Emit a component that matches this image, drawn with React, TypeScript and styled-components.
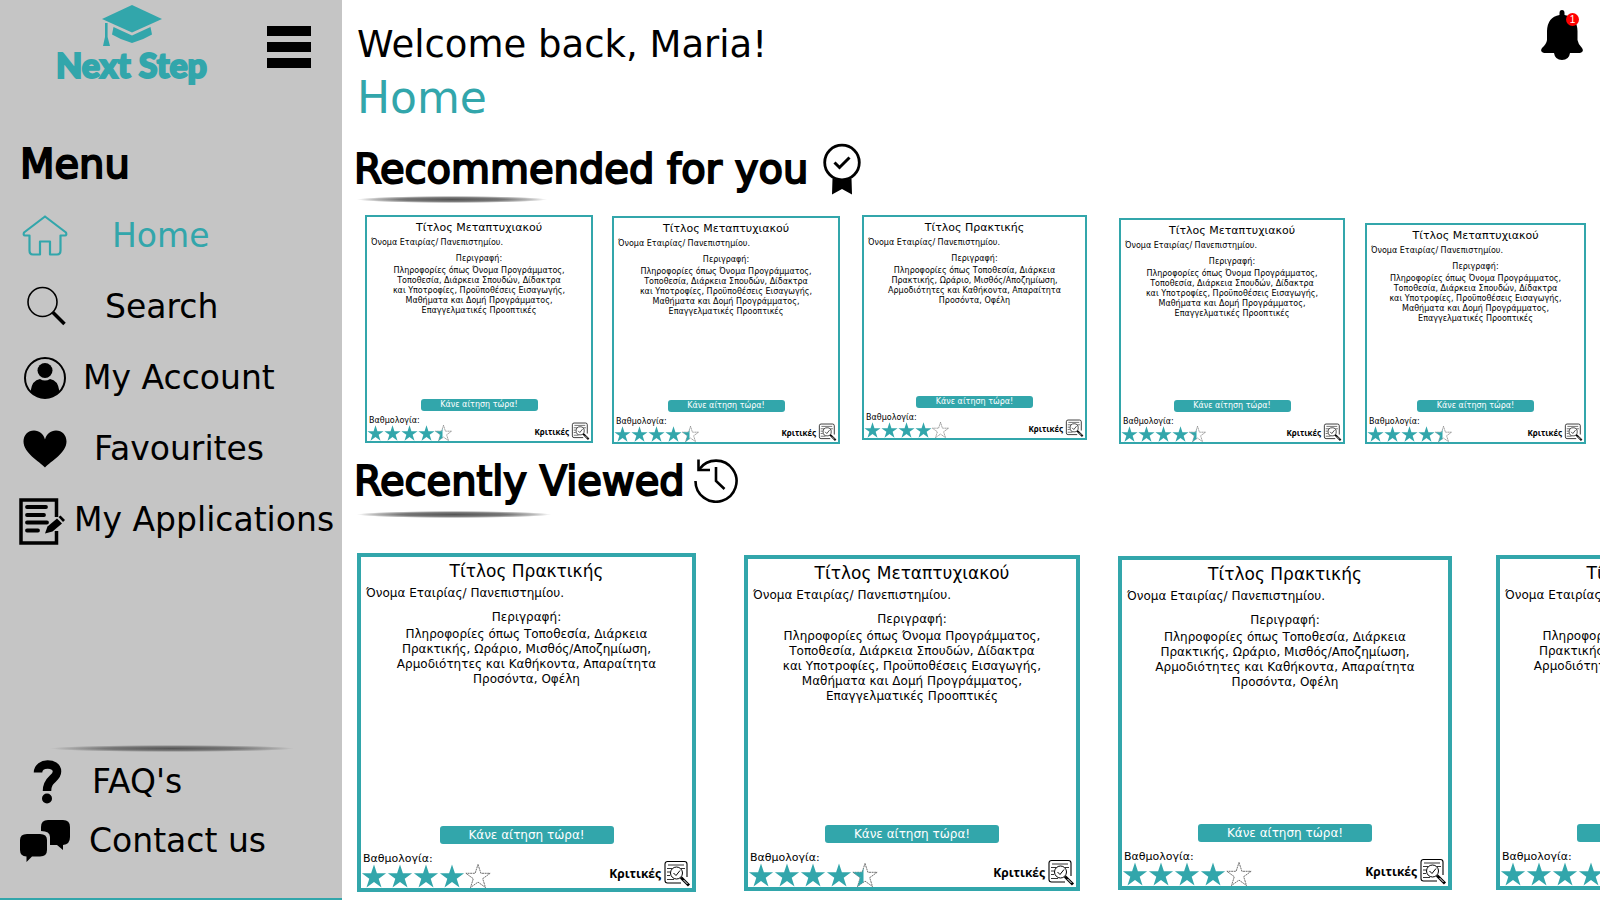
import React from "react";
import styled, { createGlobalStyle, css } from "styled-components";

const teal = "#32a6ab";

const GlobalStyle = createGlobalStyle`
  *, *::before, *::after { box-sizing: border-box; }
  body {
    margin: 0;
    background: #fff;
    color: #000;
    font-family: Verdana, "DejaVu Sans", sans-serif;
  }
  h1, h2, h3, p, ul { margin: 0; padding: 0; font-weight: 400; }
  ul { list-style: none; }
  a { color: inherit; text-decoration: none; }
  button { font-family: inherit; color: inherit; border: 0; padding: 0; background: none; cursor: pointer; }
  svg { display: block; flex: none; }
`;

const Page = styled.div`
  display: flex;
  min-height: 100vh;
`;

const Sidebar = styled.aside`
  display: flex;
  flex-direction: column;
  flex: none;
  width: 342px;
  background: #c5c5c5;
  border-bottom: 2px solid ${teal};
`;

const SidebarHeader = styled.div`
  display: flex;
  justify-content: space-between;
  align-items: flex-start;
  padding: 4px 31px 0 56px;
  height: 137px;
`;

const Brand = styled.a`
  display: flex;
  flex-direction: column;
  align-items: center;
  color: ${teal};
`;

const BrandName = styled.span`
  font-family: Lato, sans-serif;
  font-weight: 900;
  font-size: 34px;
  line-height: 34px;
  white-space: nowrap;
  -webkit-text-stroke: 2px ${teal};
`;

const MenuButton = styled.button`
  display: flex;
  flex-direction: column;
  gap: 6px;
  width: 44px;
  margin-top: 22px;
`;

const MenuBar = styled.span`
  height: 10px;
  background: #000;
`;

const heading = css`
  font-size: 40px;
  line-height: 54px;
  white-space: nowrap;
  -webkit-text-stroke: 2px #000;
`;

const MenuTitle = styled.h2`
  ${heading}
  padding-left: 20px;
  margin-bottom: 9px;
`;

const NavList = styled.ul<{ $row: number }>`
  li { height: ${(p) => p.$row}px; }
`;

const NavLink = styled.a<{ $active?: boolean; $gap: number }>`
  display: flex;
  align-items: center;
  gap: ${(p) => p.$gap}px;
  height: 100%;
  padding-left: 19px;
  color: ${(p) => (p.$active ? teal : "#000")};
  font-size: 33px;
  line-height: 40px;
  white-space: nowrap;
`;

const IconSlot = styled.span`
  display: flex;
  justify-content: center;
  flex: none;
  width: 52px;
`;

const SidebarFooter = styled.div`
  margin-top: auto;
  padding-bottom: 28px;
`;

const Shade = styled.div<{ $width: number }>`
  width: ${(p) => p.$width}px;
  height: 7px;
  background: radial-gradient(closest-side, #555 0%, #777 55%, rgba(140, 140, 140, 0.6) 82%, rgba(160, 160, 160, 0) 100%);
`;

const SidebarShade = styled(Shade)`
  margin-left: 50px;
`;

const Main = styled.main`
  flex: 1;
  min-width: 0;
  overflow: hidden;
`;

const TopBar = styled.header`
  display: flex;
  justify-content: space-between;
  align-items: flex-start;
  padding: 9px 16px 0 15px;
`;

const Greeting = styled.p`
  padding-top: 12px;
  font-size: 37px;
  line-height: 48px;
`;

const PageTitle = styled.h1`
  color: ${teal};
  font-size: 44px;
  line-height: 58px;
`;

const BellButton = styled.button`
  position: relative;
  width: 44px;
  height: 52px;
`;

const Badge = styled.span`
  position: absolute;
  top: 4px;
  right: 5px;
  width: 13px;
  height: 13px;
  border-radius: 50%;
  background: #f00;
  color: #fff;
  font: 10px/13px "Liberation Sans", sans-serif;
  text-align: center;
`;

const SectionHead = styled.div<{ $gap: number }>`
  display: flex;
  align-items: center;
  gap: ${(p) => p.$gap}px;
  padding-left: 12px;
`;

const SectionTitle = styled.h2`
  ${heading}
`;

const SectionShade = styled(Shade)`
  margin-left: 15px;
`;

const RecommendedSection = styled.section`
  padding-top: 15px;
`;

const RecentSection = styled.section`
  padding-top: 10px;
  ${SectionShade} { margin-top: 3px; }
`;

const RecommendedGrid = styled.div`
  display: grid;
  grid-template-columns: 247fr 250fr 257fr 246fr 221fr;
  grid-template-rows: 229px;
  padding: 12px 14px 0 23px;
`;

const RecentStrip = styled.div`
  display: grid;
  grid-template-columns: 387px 374px 378px 335px;
  align-items: center;
  padding: 35px 0 7px 15px;
`;

type Scale = {
  border: number;
  title: number; titleLine: number;
  text: number; textLine: number;
  companyLine: number; inset: number; gap: number;
  buttonWidth: number; buttonHeight: number;
  label: number; labelLine: number; star: number;
  reviews: number; icon: number; footer: number;
};

const large: Scale = {
  border: 4, title: 17, titleLine: 28, text: 12, textLine: 15,
  companyLine: 16, inset: 5, gap: 9,
  buttonWidth: 174, buttonHeight: 18,
  label: 11, labelLine: 11, star: 26,
  reviews: 12, icon: 28, footer: 44,
};

const small: Scale = {
  border: 2, title: 11, titleLine: 21, text: 8, textLine: 10,
  companyLine: 10, inset: 4, gap: 6,
  buttonWidth: 117, buttonHeight: 12,
  label: 8, labelLine: 8, star: 17,
  reviews: 8, icon: 19, footer: 30,
};

const CardBox = styled.article<{ $s: Scale; $size: number; $align?: string }>`
  display: flex;
  flex-direction: column;
  align-items: center;
  align-self: ${(p) => p.$align ?? "auto"};
  width: ${(p) => p.$size}px;
  height: ${(p) => p.$size}px;
  border: ${(p) => p.$s.border}px solid ${teal};
  background: #fff;
  white-space: nowrap;
`;

const CardTitle = styled.h3<{ $s: Scale }>`
  font-size: ${(p) => p.$s.title}px;
  line-height: ${(p) => p.$s.titleLine}px;
`;

const Company = styled.p<{ $s: Scale }>`
  align-self: flex-start;
  padding-left: ${(p) => p.$s.inset}px;
  font-size: ${(p) => p.$s.text}px;
  line-height: ${(p) => p.$s.companyLine}px;
`;

const Description = styled.div<{ $s: Scale }>`
  padding-top: ${(p) => p.$s.gap}px;
  text-align: center;
  font-size: ${(p) => p.$s.text}px;
  line-height: ${(p) => p.$s.textLine}px;
  p:first-child { margin-bottom: 2px; }
`;

const Line = styled.span`
  display: block;
`;

const Apply = styled.button<{ $s: Scale }>`
  margin-top: auto;
  width: ${(p) => p.$s.buttonWidth}px;
  height: ${(p) => p.$s.buttonHeight}px;
  border-radius: 3px;
  background: ${teal};
  color: #fff;
  font-size: ${(p) => p.$s.text}px;
  line-height: ${(p) => p.$s.buttonHeight}px;
`;

const CardFooter = styled.div<{ $s: Scale }>`
  display: flex;
  justify-content: space-between;
  align-items: flex-end;
  align-self: stretch;
  height: ${(p) => p.$s.footer}px;
  padding: 0 1px 0 0;
`;

const RatingLabel = styled.p<{ $s: Scale }>`
  padding-left: 2px;
  font-size: ${(p) => p.$s.label}px;
  line-height: ${(p) => p.$s.labelLine}px;
`;

const Stars = styled.div`
  display: flex;
`;

const Reviews = styled.a<{ $s: Scale }>`
  display: flex;
  align-items: center;
  gap: 2px;
  font-family: "Open Sans", "Noto Sans", sans-serif;
  font-weight: 700;
  font-size: ${(p) => p.$s.reviews}px;
  line-height: ${(p) => p.$s.icon}px;
`;

const starPath = "M12.5 1 15.4 9.8 24.6 9.8 17.2 15.2 20 24 12.5 18.6 5 24 7.8 15.2 .4 9.8 9.6 9.8Z";
const halfStarPath = "M11 5.5 V19.7 L5 24 7.8 15.2 .4 9.8 9.6 9.8Z";

function Star({ fill, size }: { fill: number; size: number }) {
  return (
    <svg width={size} height={Math.round(size * 0.92)} viewBox="0 .5 25 24" aria-hidden="true">
      {fill < 1 && <path d={starPath} fill="#fff" stroke="#333" strokeWidth=".7" strokeDasharray="2 .6" />}
      {fill === 1 && <path d={starPath} fill={teal} />}
      {fill === 0.5 && <path d={halfStarPath} fill={teal} />}
    </svg>
  );
}

function ReviewIcon({ size }: { size: number }) {
  return (
    <svg width={size} height={size} viewBox="0 0 28 28" fill="none" stroke="#000" aria-hidden="true">
      <path d="M24 17V4a2.500 2.500 0 0 0-2.500-2.500h-17A2.500 2.500 0 0 0 2 4v16.500A2.500 2.500 0 0 0 4.500 23H18" strokeWidth="1.100" />
      <path d="M5 5h16M4 8.500h5M18 8.500h4M4 12h3M4 15.500h3M4 19.500h7" strokeWidth=".8" />
      <circle cx="13.500" cy="13" r="6" strokeWidth="1" />
      <path d="m10.500 13 2.500 2.500 4-5" strokeWidth="1" />
      <path d="m18 17.500 8 8" strokeWidth="3" />
      <path d="m20.500 20 4 4" stroke="#fff" strokeWidth="1" />
    </svg>
  );
}

type Kind = "internship" | "masters";

const content: Record<Kind, { title: string; lines: string[]; rating: number }> = {
  internship: {
    title: "Τίτλος Πρακτικής",
    lines: [
      "Πληροφορίες όπως Τοποθεσία, Διάρκεια",
      "Πρακτικής, Ωράριο, Μισθός/Αποζημίωση,",
      "Αρμοδιότητες και Καθήκοντα, Απαραίτητα",
      "Προσόντα, Οφέλη",
    ],
    rating: 4,
  },
  masters: {
    title: "Τίτλος Μεταπτυχιακού",
    lines: [
      "Πληροφορίες όπως Όνομα Προγράμματος,",
      "Τοποθεσία, Διάρκεια Σπουδών, Δίδακτρα",
      "και Υποτροφίες, Προϋποθέσεις Εισαγωγής,",
      "Μαθήματα και Δομή Προγράμματος,",
      "Επαγγελματικές Προοπτικές",
    ],
    rating: 4.5,
  },
};

function Card({ kind, size, scale, align }: { kind: Kind; size: number; scale: Scale; align?: string }) {
  const { title, lines, rating } = content[kind];
  return (
    <CardBox $s={scale} $size={size} $align={align}>
      <CardTitle $s={scale}>{title}</CardTitle>
      <Company $s={scale}>Όνομα Εταιρίας/ Πανεπιστημίου.</Company>
      <Description $s={scale}>
        <p>Περιγραφή:</p>
        <p>
          {lines.map((line) => (
            <Line key={line}>{line}</Line>
          ))}
        </p>
      </Description>
      <Apply $s={scale} type="button">Κάνε αίτηση τώρα!</Apply>
      <CardFooter $s={scale}>
        <div>
          <RatingLabel $s={scale}>Βαθμολογία:</RatingLabel>
          <Stars>
            {[0, 1, 2, 3, 4].map((i) => (
              <Star key={i} fill={Math.max(0, Math.min(1, rating - i))} size={scale.star} />
            ))}
          </Stars>
        </div>
        <Reviews $s={scale} href="#reviews">
          Κριτικές
          <ReviewIcon size={scale.icon} />
        </Reviews>
      </CardFooter>
    </CardBox>
  );
}

const CapLogo = () => (
  <svg width="62" height="44" viewBox="0 0 62 44" fill={teal} aria-hidden="true">
    <path d="M31 1 61 15 31 28.500 1 15Z" />
    <path d="M12.500 23 31 31.500 49.500 23 51 30.500Q42 36 31 39 20 36 11 30.500Z" />
    <path d="M4 19h2.600v14L9 42H2l2-9Z" />
  </svg>
);

const HomeIcon = () => (
  <svg width="46" height="44" viewBox="0 0 46 44" fill="none" stroke={teal} strokeWidth="2.200" strokeLinejoin="round" aria-hidden="true">
    <path d="M23 2.500 2 18.500Q1 21.500 3 21.500H7.500V36.500Q7.500 40.500 11 40.500H18V27.500H28V40.500H35Q38.500 40.500 38.500 36.500V21.500H43Q45 21.500 44 18.500Z" />
  </svg>
);

const SearchIcon = () => (
  <svg width="42" height="42" viewBox="-2 1 42 42" fill="none" stroke="#000" aria-hidden="true">
    <circle cx="16.500" cy="17" r="14.500" strokeWidth="1.600" />
    <path d="M26.500 27 38.500 39" strokeWidth="3.500" />
  </svg>
);

const AccountIcon = () => (
  <svg width="42" height="42" viewBox="0 0 42 42" aria-hidden="true">
    <circle cx="21" cy="21" r="20" fill="none" stroke="#000" strokeWidth="2" />
    <circle cx="21" cy="13.500" r="7.500" />
    <path d="M6.500 34.500Q8 23 16 22Q21 25 26 22Q34 23 35.500 34.500Q29 41 21 41T6.500 34.500Z" />
  </svg>
);

const HeartIcon = () => (
  <svg width="44" height="38" viewBox="0 0 44 38" aria-hidden="true">
    <path d="M22 37.500C16 31 .5 23 .5 11.500.5 5 5 .5 11 .5 16.500.5 20.500 4 22 9.500 23.500 4 27.500.5 33 .5 39 .5 43.500 5 43.500 11.500 43.500 23 28 31 22 37.500Z" />
  </svg>
);

const ApplicationsIcon = () => (
  <svg width="52" height="50" viewBox="0 -3 52 50" fill="none" stroke="#000" aria-hidden="true">
    <path d="M37.500 19V2H2V45H37.500V33" strokeWidth="3.500" />
    <path d="M8 9H27M8 17H25M8 24.500H28M8 32.500H19" strokeWidth="3.800" strokeLinecap="round" />
    <path d="M26 35.500 28.500 28.500 38 20.500 43 25.500 33.500 33.500Z" fill="#000" stroke="none" />
    <path d="m39.500 19 2-1.500 4.500 4.500-2 2Z" fill="#000" stroke="none" />
  </svg>
);

const QuestionIcon = () => (
  <svg width="36" height="44" viewBox="-6 0 36 44" fill="none" stroke="#000" aria-hidden="true">
    <path d="M5 12.500C5 2 24 2 24 11.500 24 19 14 18.500 14 31" strokeWidth="8.500" />
    <circle cx="14" cy="38.500" r="5" fill="#000" stroke="none" />
  </svg>
);

const ChatIcon = () => (
  <svg width="52" height="43" viewBox="0 0 52 43" aria-hidden="true">
    <path d="M29 1H44Q51 1 51 8V18Q51 25.500 44 26V31L38 26H31V18Q31 12 22 12V8Q22 1 29 1Z" />
    <path d="M8 15H21Q28 15 28 21V31Q28 37.500 21 37.500H13L7.500 43V37.500Q1 37 1 31V21Q1 15 8 15Z" />
  </svg>
);

const BellIcon = () => (
  <svg width="44" height="52" viewBox="0 0 44 52" aria-hidden="true">
    <path d="M22 1Q24.500 1 24.500 4V6Q37 8 37.500 22V31Q38 35 42 39Q44.500 43 40 44H30Q29 51 22 51T14 44H4Q-.5 43 2 39 6.500 35 7 31V22Q7.500 8 19.500 6V4Q19.500 1 22 1Z" />
  </svg>
);

const AwardIcon = () => (
  <svg width="38" height="52" viewBox="0 0 38 52" fill="none" stroke="#000" aria-hidden="true">
    <circle cx="19" cy="19.500" r="17.300" strokeWidth="2.800" />
    <path d="m11.500 19.500 5 5 10-10" strokeWidth="3" />
    <path d="M9.500 35.500Q19 39.500 28.500 35.500L29 51.500 19 46 9 51.500Z" fill="#000" stroke="none" />
  </svg>
);

const HistoryIcon = () => (
  <svg width="44" height="44" viewBox="0 0 44 44" fill="none" stroke="#000" strokeWidth="2.600" aria-hidden="true">
    <path d="M1.500 22A20.500 20.500 0 1 0 5.500 10" />
    <path d="M4.500 .5V11H16" />
    <path d="M22 8V22L30.500 30" />
  </svg>
);

type NavItem = { label: string; Icon: () => React.JSX.Element; gap: number; active?: boolean };

const mainLinks: NavItem[] = [
  { label: "Home", Icon: HomeIcon, gap: 41, active: true },
  { label: "Search", Icon: SearchIcon, gap: 34 },
  { label: "My Account", Icon: AccountIcon, gap: 12 },
  { label: "Favourites", Icon: HeartIcon, gap: 23 },
  { label: "My Applications", Icon: ApplicationsIcon, gap: 3 },
];

const helpLinks: NavItem[] = [
  { label: "FAQ's", Icon: QuestionIcon, gap: 21 },
  { label: "Contact us", Icon: ChatIcon, gap: 18 },
];

function NavItems({ items, row }: { items: NavItem[]; row: number }) {
  return (
    <NavList $row={row}>
      {items.map(({ label, Icon, gap, active }) => (
        <li key={label}>
          <NavLink href="#" $gap={gap} $active={active} aria-current={active ? "page" : undefined}>
            <IconSlot><Icon /></IconSlot>
            {label}
          </NavLink>
        </li>
      ))}
    </NavList>
  );
}

export default function App() {
  return (
    <>
      <GlobalStyle />
      <Page>
        <Sidebar>
          <SidebarHeader>
            <Brand href="#">
              <CapLogo />
              <BrandName>Next Step</BrandName>
            </Brand>
            <MenuButton type="button" aria-label="Toggle menu">
              <MenuBar />
              <MenuBar />
              <MenuBar />
            </MenuButton>
          </SidebarHeader>
          <MenuTitle>Menu</MenuTitle>
          <nav aria-label="Main">
            <NavItems items={mainLinks} row={71} />
          </nav>
          <SidebarFooter>
            <SidebarShade $width={244} />
            <NavItems items={helpLinks} row={59} />
          </SidebarFooter>
        </Sidebar>
        <Main>
          <TopBar>
            <div>
              <Greeting>Welcome back, Maria!</Greeting>
              <PageTitle>Home</PageTitle>
            </div>
            <BellButton type="button" aria-label="Notifications">
              <BellIcon />
              <Badge>1</Badge>
            </BellButton>
          </TopBar>
          <RecommendedSection>
            <SectionHead $gap={15}>
              <SectionTitle>Recommended for you</SectionTitle>
              <AwardIcon />
            </SectionHead>
            <SectionShade $width={190} />
            <RecommendedGrid>
              <Card kind="masters" size={228} scale={small} align="start" />
              <Card kind="masters" size={228} scale={small} align="end" />
              <Card kind="internship" size={225} scale={small} align="start" />
              <Card kind="masters" size={226} scale={small} align="end" />
              <Card kind="masters" size={221} scale={small} align="end" />
            </RecommendedGrid>
          </RecommendedSection>
          <RecentSection>
            <SectionHead $gap={9}>
              <SectionTitle>Recently Viewed</SectionTitle>
              <HistoryIcon />
            </SectionHead>
            <SectionShade $width={194} />
            <RecentStrip>
              <Card kind="internship" size={339} scale={large} />
              <Card kind="masters" size={336} scale={large} />
              <Card kind="internship" size={334} scale={large} />
              <Card kind="internship" size={335} scale={large} />
            </RecentStrip>
          </RecentSection>
        </Main>
      </Page>
    </>
  );
}
